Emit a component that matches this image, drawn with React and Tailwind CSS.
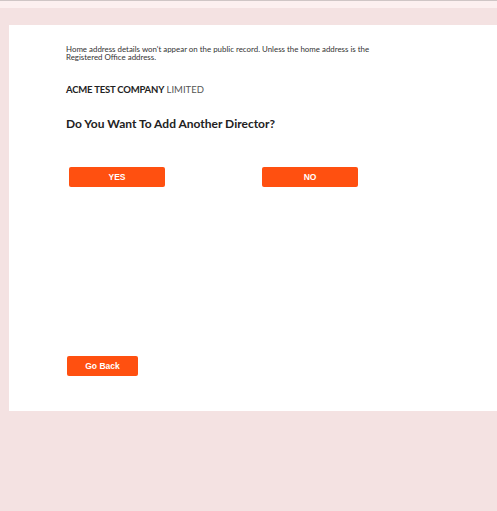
export default function App() {
  return (
    <div className="min-h-[511px] bg-[#f4e2e2] font-['Lato',sans-serif]">
      <div className="h-px bg-[#cfc6c6]" />
      <div className="h-[7px] bg-[#fcf0f0]" />
      <div className="pt-[17px]">
        <div className="ml-[9px] h-[386px] bg-white pl-[57px] pt-[20px]">
          <p className="w-[320px] text-[7.9px] leading-[8px] text-[#333]">
            Home address details won't appear on the public record. Unless the home address is the Registered Office address.
          </p>
          <p className="mt-[23px] text-[9.5px] leading-[12px] text-[#222]">
            <span className="font-bold tracking-[-0.2px]">ACME TEST COMPANY</span>{' '}
            <span className="text-[#555]">LIMITED</span>
          </p>
          <h1 className="mt-[20px] text-[12px] font-bold leading-[16px] text-[#222]">
            Do You Want To Add Another Director?
          </h1>
          <div className="mt-[35px] ml-[3px] flex gap-[97px]">
            <button className="h-5 w-[96px] rounded-[2px] bg-[#ff5010] text-[8.5px] font-bold text-white font-['Liberation_Sans',sans-serif]">
              YES
            </button>
            <button className="h-5 w-[96px] rounded-[2px] bg-[#ff5010] text-[8.5px] font-bold text-white font-['Liberation_Sans',sans-serif]">
              NO
            </button>
          </div>
          <button className="mt-[169px] ml-[1px] h-5 w-[71px] rounded-[2px] bg-[#ff5010] text-[8.5px] font-bold text-white font-['Liberation_Sans',sans-serif]">
            Go Back
          </button>
        </div>
      </div>
    </div>
  );
}
